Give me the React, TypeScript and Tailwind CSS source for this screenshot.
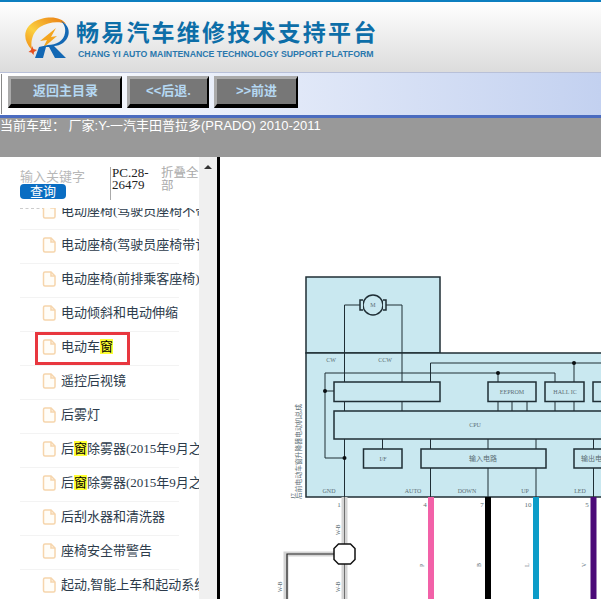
const rows: { parts: [string, boolean][]; boxed?: boolean }[] = [
  { parts: [["电动座椅(驾驶员座椅不带记忆)", false]] },
  { parts: [["电动座椅(驾驶员座椅带记忆)", false]] },
  { parts: [["电动座椅(前排乘客座椅)", false]] },
  { parts: [["电动倾斜和电动伸缩", false]] },
  { parts: [["电动车", false], ["窗", true]], boxed: true },
  { parts: [["遥控后视镜", false]] },
  { parts: [["后雾灯", false]] },
  { parts: [["后", false], ["窗", true], ["除雾器(2015年9月之前)", false]] },
  { parts: [["后", false], ["窗", true], ["除雾器(2015年9月之后)", false]] },
  { parts: [["后刮水器和清洗器", false]] },
  { parts: [["座椅安全带警告", false]] },
  { parts: [["起动,智能上车和起动系统", false]] },
];

function Logo() {
  return (
    <svg width="47" height="42" viewBox="0 0 47 42" className="shrink-0">
      <defs>
        <linearGradient id="ring" x1="0" y1="1" x2="1" y2="0">
          <stop offset="0" stopColor="#f08a12" />
          <stop offset="0.4" stopColor="#fbd040" />
          <stop offset="1" stopColor="#e9780f" />
        </linearGradient>
      </defs>
      <path d="M8 33 C-3 22 -1 7 17 2 C28 -1 38 1 42 7 C35 4 24 5 16 10 C9 15 6 24 8 33 Z" fill="url(#ring)" />
      <path d="M16 24 L32 11 L27 20 L33 19 L19 31 L23 23 Z" fill="#f4a51d" />
      <path d="M37 4 C47 9 47 20 39 26 C36 28 33 29 30 29 L42 41 L31 41 L25 30 L22 30 L19 41 L11 41 L15 30 L24 28 C32 28 40 24 41 16 C42 11 40 7 37 4 Z" fill="#1368b4" />
      <path d="M8 29 L9.5 32 L13 33 L10 35 L9.5 38 L7.5 35.5 L4.5 35 L7 33 Z" fill="#e8501e" />
    </svg>
  );
}

function NavButton({ label, width }: { label: string; width: string }) {
  return (
    <button
      className={`${width} h-[32px] flex items-center justify-center bg-[#777777] border-t-[3px] border-l-[3px] border-r-[2px] border-b-[4px] border-t-[#aaaaaa] border-l-[#aaaaaa] border-r-black border-b-black text-[13px] font-bold text-[#b5d8f2] pb-[1px]`}
    >
      {label}
    </button>
  );
}

function FileIcon() {
  return (
    <svg width="14" height="16" viewBox="0 0 14 16" className="shrink-0" fill="#fffdf8" stroke="#f6d5ac" strokeWidth="1.5">
      <path d="M1.5 2.5 Q1.5 1 3 1 L9 1 L13 5 L13 13.5 Q13 15 11.5 15 L3 15 Q1.5 15 1.5 13.5 Z" />
      <path d="M9 1 L9 5 L13 5" fill="none" />
    </svg>
  );
}

function Diagram() {
  const dark = "#1f2e35";
  const wireText = { fontFamily: "'Liberation Serif', serif", fill: "#5c6e75" };
  const box = (x: number, y: number, w: number, h: number) => (
    <rect x={x} y={y} width={w} height={h} fill="#c9e8f0" stroke={dark} strokeWidth="1.5" />
  );
  const labels: [string, number, number][] = [
    ["CW", 331, 362],
    ["CCW", 385, 362],
    ["EEPROM", 512, 394],
    ["HALL IC", 565, 394],
    ["CPU", 475, 427],
    ["I/F", 383, 461],
    ["GND", 329, 493],
    ["AUTO", 413, 493],
    ["DOWN", 467, 493],
    ["UP", 525, 493],
    ["LED", 580, 493],
  ];
  const pins: [string, number][] = [["1", 339], ["4", 425], ["7", 482], ["10", 528], ["5", 587]];
  return (
    <svg width="381" height="442" viewBox="220 157 381 442" className="block">
      <rect x="306" y="277" width="134" height="76" fill="#c9e8f0" stroke={dark} strokeWidth="1.5" />
      <rect x="306" y="353" width="320" height="144" fill="#c9e8f0" stroke={dark} strokeWidth="1.5" />

      <g stroke={dark} strokeWidth="1" fill="none">
        <path d="M344.5 382 V305 H362 M384 305 H402 V382" />
        <path d="M430.5 382 V363 H601 M574 363 V382" />
        <path d="M555 382 V373 H325 V458 H344.5 M498 373 V382 M325 391 H334" />
        <path d="M344.5 401 V411 M402 401 V411 M498 401 V411 M512 401 V411 M527 401 V411 M555 401 V411 M574 401 V411" />
        <path d="M344.5 439 V497 M382.5 439 V449 M430.5 439 V497 M488 439 V497 M536 439 V497 M593.5 439 V497" />
      </g>
      <g fill="#0a0f12">
        <circle cx="574" cy="363" r="2" />
        <circle cx="498" cy="373" r="2" />
        <circle cx="325" cy="391" r="2" />
        <circle cx="344.5" cy="458" r="2" />
      </g>

      <circle cx="373" cy="305" r="10" fill="#c9e8f0" stroke={dark} strokeWidth="1.5" />
      <path d="M363 300 H360 V310 H363 M383 300 H386 V310 H383" fill="#c9e8f0" stroke={dark} strokeWidth="1.5" />
      <text x="373" y="307" textAnchor="middle" fontSize="6" style={wireText}>M</text>

      {box(334, 382, 106, 19.5)}
      {box(488, 382, 48, 19.5)}
      {box(545, 382, 39, 19.5)}
      {box(593, 382, 30, 19.5)}
      {box(334, 411, 290, 28)}
      {box(363.5, 449, 38.5, 19)}
      {box(421, 449, 125, 19)}
      {box(574, 449, 40, 19)}

      {labels.map(([t, x, y]) => (
        <text key={t} x={x} y={y} textAnchor="middle" fontSize="6" style={wireText}>{t}</text>
      ))}
      <text x="483" y="461" textAnchor="middle" fontSize="7" fill="#5c6e75" fontFamily="'Noto Sans CJK SC', sans-serif">输入电路</text>
      <text x="581" y="461" fontSize="7" fill="#5c6e75" fontFamily="'Noto Sans CJK SC', sans-serif" textAnchor="start">输出电路</text>
      <text transform="translate(301 499) rotate(-90)" fontSize="6.8" fill="#5c6e75" fontFamily="'Noto Sans CJK SC', sans-serif">后前电动车窗升降器电动机总成</text>
      <text transform="translate(295 499) rotate(-90)" fontSize="6.5" fill="#5c6e75" fontFamily="'Liberation Serif', serif">J7</text>

      <rect x="341.5" y="497" width="6" height="102" fill="#d4d4d4" />
      <path d="M344.5 497 V599" stroke="#555" strokeWidth="0.8" />
      <path d="M341 554 H286 V599" fill="none" stroke="#d4d4d4" strokeWidth="5" />
      <path d="M341 554 H287 V599" fill="none" stroke="#222" strokeWidth="1.2" />
      <path d="M338.5 544 H350.5 L355 548.5 V559.5 L350.5 564 H338.5 L334 559.5 V548.5 Z" fill="#fff" stroke="#111" strokeWidth="1.5" />
      <rect x="428" y="497" width="6" height="102" fill="#f261a8" />
      <rect x="485" y="497" width="6" height="102" fill="#000000" />
      <rect x="533" y="497" width="6" height="102" fill="#0c9cc8" />
      <rect x="590.5" y="497" width="6" height="102" fill="#4b0a78" />

      {pins.map(([t, x]) => (
        <text key={t} x={x} y="507" textAnchor="middle" fontSize="7" style={wireText}>{t}</text>
      ))}
      {[["P", 424], ["B", 481], ["L", 529], ["V", 586]].map(([t, x]) => (
        <text key={t as string} transform={`translate(${x} 567) rotate(-90)`} fontSize="6" style={wireText}>{t}</text>
      ))}
      <text transform="translate(340 535) rotate(-90)" fontSize="5.5" style={wireText}>W-B</text>
      <text transform="translate(340 592) rotate(-90)" fontSize="5.5" style={wireText}>W-B</text>
      <text transform="translate(282 592) rotate(-90)" fontSize="5.5" style={wireText}>W-B</text>
    </svg>
  );
}

export default function App() {
  return (
    <div className="w-[601px] h-[599px] overflow-hidden bg-white flex flex-col font-['Liberation_Sans','Noto_Sans_CJK_SC',sans-serif]">
      <header className="h-[72px] shrink-0 border-t-2 border-[#0d7fc0] bg-gradient-to-b from-white to-[#dcdcdc] flex items-start pl-[24px] pt-[15px] gap-[3px]">
        <Logo />
        <div className="flex flex-col pl-[2px] pt-[1px]">
          <div className="text-[23px] leading-[30px] font-bold text-[#0d6ea8] tracking-[2.2px] whitespace-nowrap">畅易汽车维修技术支持平台</div>
          <div className="text-[8.75px] leading-[11px] mt-[1px] font-bold text-[#2a78ad] whitespace-nowrap pl-[2px]">CHANG YI AUTO MAINTENANCE TECHNOLOGY SUPPORT PLATFORM</div>
        </div>
      </header>

      <nav className="relative h-[46px] shrink-0 border-t border-t-[#b8c0d8] border-b-[3px] border-b-[#4a6bbf] bg-gradient-to-r from-white to-[#c3d1f0] flex items-start pl-[8px] pt-[3px] gap-[5px]">
        <div className="absolute left-[1px] top-[1px] bottom-[1px] w-[1px] bg-[#888888]" />
        <NavButton label="返回主目录" width="w-[114px]" />
        <NavButton label="<<后退." width="w-[82px]" />
        <NavButton label=">>前进" width="w-[84px]" />
      </nav>

      <div className="h-[39px] shrink-0 bg-[#999999] text-white text-[13px] leading-[15px] whitespace-nowrap">当前车型： 厂家:Y-一汽丰田普拉多(PRADO) 2010-2011</div>

      <div className="flex-1 flex min-h-0">
        <aside className="w-[199px] shrink-0 overflow-hidden flex flex-col font-['Liberation_Serif','Noto_Sans_CJK_SC',serif]">
          <div className="h-[51px] shrink-0 flex items-start pl-[20px] pt-[11px]">
            <div className="w-[90px] shrink-0 flex flex-col items-start pt-[1px]">
              <div className="text-[13px] leading-[15px] text-[#b8b8b8] font-['Liberation_Sans','Noto_Sans_CJK_SC',sans-serif] whitespace-nowrap">输入关键字</div>
              <div className="w-[46px] h-[15px] rounded-[4px] bg-[#0a6dc2] text-white text-[13px] leading-[15px] text-center font-['Liberation_Sans','Noto_Sans_CJK_SC',sans-serif]">查询</div>
            </div>
            <div className="w-[50px] shrink-0 border-l border-[#aaaaaa] pl-[1px] text-[13px] leading-[12px] text-[#222222] h-[33px] -mt-[1px]">PC.28-26479</div>
            <div className="w-[39px] shrink-0 pl-[1px] text-[12.5px] leading-[13px] text-[#aaaaaa] -mt-[1px] font-['Liberation_Sans','Noto_Sans_CJK_SC',sans-serif]">折叠全部</div>
          </div>
          <div className="flex-1 min-h-0 overflow-hidden">
            <div className="ml-[20px] w-[25px] h-[1px] border-t border-dashed border-[#cccccc]" />
            <div className="-mt-[13px] ml-[20px] w-[159px]">
              {rows.map((r, i) => (
                <div key={i} className="relative h-[34px] border-b border-[#f3f3f3] flex items-center pl-[22px] pb-[3px] gap-[5px] whitespace-nowrap text-[13px] text-[#2c3b4b]">
                  <FileIcon />
                  <span>
                    {r.parts.map(([t, hl], j) =>
                      hl ? <span key={j} className="bg-[#ffff33] text-black">{t}</span> : <span key={j}>{t}</span>
                    )}
                  </span>
                  {r.boxed && <div className="absolute left-[15px] top-0 w-[95px] h-[33px] border-[3px] border-[#e8373f]" />}
                </div>
              ))}
            </div>
          </div>
        </aside>

        <div className="w-[18px] shrink-0 bg-[#f0f0f0] flex justify-center pt-[8px]">
          <div className="w-0 h-0 border-l-[4px] border-r-[4px] border-b-[4px] border-l-transparent border-r-transparent border-b-[#333333]" />
        </div>
        <div className="w-[3px] shrink-0 bg-black" />
        <main className="flex-1 min-w-0 overflow-hidden bg-white">
          <Diagram />
        </main>
      </div>
    </div>
  );
}
